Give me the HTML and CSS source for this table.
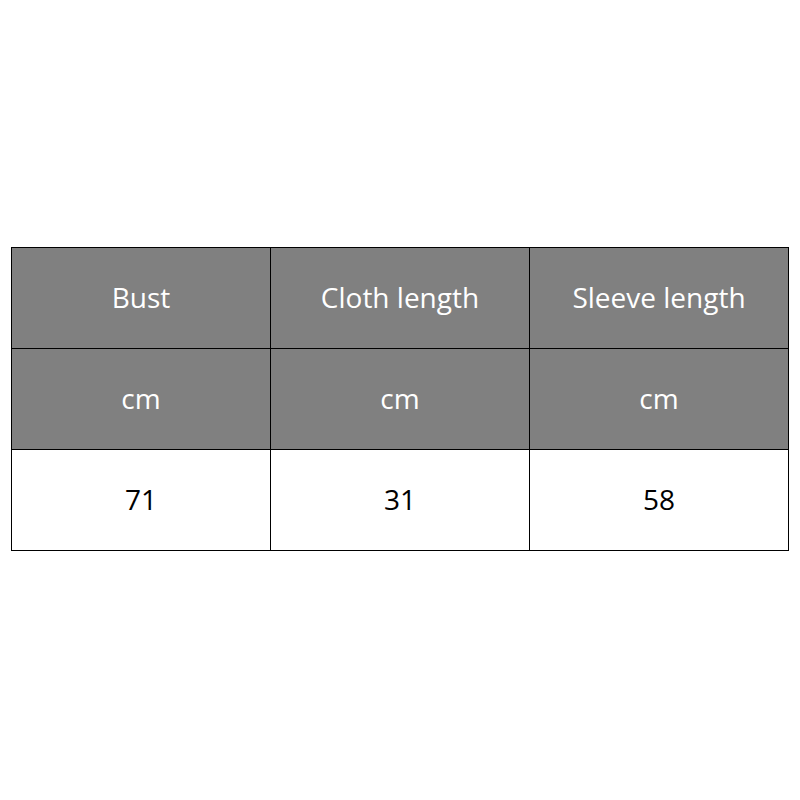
FILE: index.html
```html
<!DOCTYPE html>
<html>
<head>
<meta charset="utf-8">
<link rel="stylesheet" href="styles.css">
</head>
<body>
<div class="page">
<table class="size-table">
<tr class="head"><td>Bust</td><td>Cloth length</td><td>Sleeve length</td></tr>
<tr class="head"><td>cm</td><td>cm</td><td>cm</td></tr>
<tr class="data"><td>71</td><td>31</td><td>58</td></tr>
</table>
</div>
</body>
</html>
```
FILE: styles.css
```css
html, body { margin: 0; padding: 0; background: #fff; }
.page { width: 800px; height: 800px; padding-top: 247px; padding-left: 11px; box-sizing: border-box; }
.size-table {
  border-collapse: collapse;
  width: 778px;
  table-layout: fixed;
  font-family: "Open Sans", "Noto Sans", sans-serif;
  font-size: 28px;
}
.size-table td {
  border: 1px solid #000;
  height: 98px;
  padding: 0 0 2px 0;
  text-align: center;
  vertical-align: middle;
}
.head td { background: #808080; color: #fff; }
.data td { background: #fff; color: #000; }
```
